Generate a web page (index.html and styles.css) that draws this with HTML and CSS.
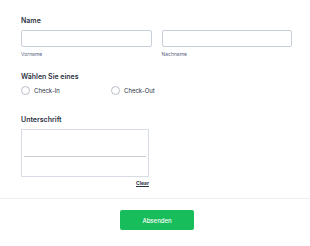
FILE: index.html
```html
<!DOCTYPE html>
<html lang="de">
<head>
<meta charset="utf-8">
<link rel="stylesheet" href="styles.css">
</head>
<body>
<form class="form">
  <div class="fields">
    <div class="field">
      <div class="label">Name</div>
      <div class="name-row">
        <div class="name-col">
          <div class="input"></div>
          <div class="sublabel">Vorname</div>
        </div>
        <div class="name-col">
          <div class="input"></div>
          <div class="sublabel">Nachname</div>
        </div>
      </div>
    </div>
    <div class="field field-radio">
      <div class="label">Wählen Sie eines</div>
      <div class="radio-row">
        <div class="radio"><span class="circle"></span><span>Check-In</span></div>
        <div class="radio"><span class="circle"></span><span>Check-Out</span></div>
      </div>
    </div>
    <div class="field field-sig">
      <div class="label">Unterschrift</div>
      <div class="sig-wrap">
        <div class="sig-box"><div class="sig-line"></div></div>
        <div class="clear">Clear</div>
      </div>
    </div>
  </div>
  <div class="footer">
    <button type="button" class="submit">Absenden</button>
  </div>
</form>
</body>
</html>
```
FILE: styles.css
```css
* { box-sizing: border-box; }
html, body { margin: 0; padding: 0; background: #fff; }
body { font-family: Inter, "Noto Sans", sans-serif; color: #2c3345; width: 310px; height: 246px; overflow: hidden; }
.fields { padding: 16px 18px 0 21px; }
.field { display: flex; flex-direction: column; }
.label { font-size: 7px; font-weight: 600; line-height: 9px; color: #2c3345; }
.name-row { display: flex; gap: 10px; margin-top: 5px; }
.name-col { width: 131px; display: flex; flex-direction: column; }
.input { height: 17px; border: 1px solid #c8ceda; border-radius: 2px; background: #fff; }
.sublabel { font-size: 5px; line-height: 7px; color: #57647e; margin-top: 4px; }
.field-radio { margin-top: 14px; }
.radio-row { display: flex; margin-top: 5px; }
.radio { display: flex; align-items: center; gap: 4px; font-size: 6px; line-height: 9px; color: #2c3345; width: 90px; }
.circle { width: 9px; height: 9px; border: 1px solid #b8bdc9; border-radius: 50%; background: #fff; }
.field-sig { margin-top: 20px; }
.sig-wrap { width: 128px; margin-top: 5px; display: flex; flex-direction: column; }
.sig-box { height: 48px; border: 1px solid #d8dce4; background: #fff; padding: 26px 2px 0; }
.sig-line { height: 1px; background: #c9ccd2; }
.clear { align-self: flex-end; font-size: 5px; font-weight: 700; text-decoration: underline; color: #2c3345; margin-top: 3px; line-height: 6px; }
.footer { margin-top: 12px; border-top: 1px solid #eceef1; display: flex; justify-content: center; padding: 11px 0 0 4px; }
.submit { width: 74px; height: 20px; border: none; border-radius: 2px; background: #18bd5b; color: #fff; font-family: Inter, "Noto Sans", sans-serif; font-size: 6px; font-weight: 500; padding: 0; }
```
